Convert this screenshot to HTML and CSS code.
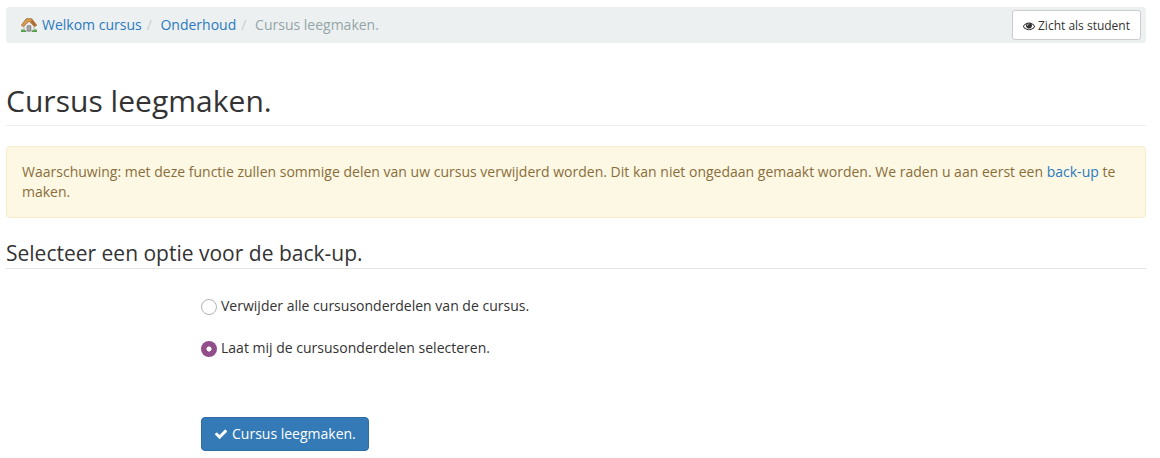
FILE: index.html
```html
<!DOCTYPE html>
<html lang="nl">
<head>
<meta charset="utf-8">
<title>Cursus leegmaken</title>
<link rel="stylesheet" href="styles.css">
</head>
<body>
<nav class="breadcrumb">
  <svg class="home" viewBox="0 0 16 16" width="16" height="16"><path d="M3 7.500v6.500h10V7.500L8 3z" fill="#ececea" stroke="#a8a8a2" stroke-width=".8"/><path d="M6.200 8.800h3.600V14H6.200z" fill="#a7a7ab" stroke="#77777b" stroke-width=".8"/><path d="M.3 8.300 5.300 1.700h5.400l5 6.600-2 1.300L8 4.200 2.300 9.600z" fill="#d79b50" stroke="#a26a2d" stroke-width=".8"/><path d="M10.700 2.200l4.600 6-1.600 1L10 5.300z" fill="#aa6836"/><path d="M0 14.700V13l1.500-1 1.300 1 1.200-.4.800 2.100zM11.200 14.700l.8-2 1.200.3 1.300-1L16 13v1.700z" fill="#62b451"/><path d="M0 14.300h5M11 14.300h5" stroke="#3f8140" stroke-width=".8"/></svg>
  <a href="#">Welkom cursus</a><span class="sep">/</span><a href="#">Onderhoud</a><span class="sep">/</span><span class="current">Cursus leegmaken.</span>
  <button class="view"><svg viewBox="0 0 1792 1792" width="12" height="12"><path fill="currentColor" d="M1664 960q-152-236-381-353 61 104 61 225 0 185-131.500 316.500t-316.500 131.500-316.500-131.500-131.500-316.500q0-121 61-225-229 117-381 353 133 205 333.500 326.500t434.500 121.500 434.500-121.500 333.500-326.500zm-720-384q0-20-14-34t-34-14q-125 0-214.500 89.500t-89.500 214.500q0 20 14 34t34 14 34-14 14-34q0-86 61-147t147-61q20 0 34-14t14-34zm848 384q0 34-20 69-140 230-376.500 368.500t-499.500 138.500-499.500-139-376.500-368q-20-35-20-69t20-69q140-229 376.500-368t499.500-139 499.500 139 376.500 368q20 35 20 69z"/></svg>Zicht als student</button>
</nav>
<h1>Cursus leegmaken.</h1>
<div class="warning">Waarschuwing: met deze functie zullen sommige delen van uw cursus verwijderd worden. Dit kan niet ongedaan gemaakt worden. We raden u aan eerst een <a href="#">back-up</a> te maken.</div>
<form>
  <h2>Selecteer een optie voor de back-up.</h2>
  <div class="fields">
    <label><input type="radio" name="option">Verwijder alle cursusonderdelen van de cursus.</label>
    <label><input type="radio" name="option" checked>Laat mij de cursusonderdelen selecteren.</label>
    <button type="button" class="submit"><svg viewBox="0 0 1792 1792" width="14" height="14"><path fill="currentColor" d="M1671 566q0 40-28 68l-724 724-136 136q-28 28-68 28t-68-28l-136-136-362-362q-28-28-28-68t28-68l136-136q28-28 68-28t68 28l294 295 656-657q28-28 68-28t68 28l136 136q28 28 28 68z"/></svg>Cursus leegmaken.</button>
  </div>
</form>
</body>
</html>
```
FILE: styles.css
```css
* { box-sizing: border-box; }
body { margin: 7px 14px 0 6px; font: 14px/20px "Open Sans", sans-serif; color: #333; background: #fff; }
a { color: #2a7abf; text-decoration: none; }
.breadcrumb { display: flex; align-items: center; height: 36px; margin-bottom: 36px; padding: 0 5px 0 15px; background: #ecf0f1; border-radius: 4px; }
.home { margin-right: 5px; }
.sep { padding: 0 8.700px 0 5px; color: #ccc; }
.current { color: #95a5a6; }
.view { display: flex; align-items: center; gap: 3px; height: 30px; width: 129px; margin-left: auto; padding: 2px 10px 1px; border: 1px solid #ccc; border-radius: 3px; background: #fff; color: #333; font: 12px/18px "Open Sans", sans-serif; white-space: nowrap; }
h1 { height: 47px; margin: 0 0 20px; padding-top: 5px; border-bottom: 1px solid #eee; font-size: 30px; line-height: 33px; font-weight: 400; letter-spacing: .03px; }
.warning { height: 72px; padding: 15px; border: 1px solid #faebcc; border-radius: 4px; background: #fcf8e3; color: #8a6d3b; letter-spacing: .007px; }
h2 { height: 31px; margin: 20px 0 27px; border-bottom: 1px solid #e5e5e5; font-size: 21px; line-height: 30px; font-weight: 400; }
.fields { display: flex; flex-direction: column; align-items: flex-start; padding-left: 195px; }
label { display: flex; height: 20px; margin-bottom: 22px; letter-spacing: .007px; }
input { appearance: none; width: 16px; height: 16px; margin: 3px 4px 0 0; border: 1px solid #b3b3b3; border-radius: 50%; background: #fff; }
input:checked { border: 0; background: radial-gradient(circle, #fff 0 2.200px, #924d8b 2.900px); }
.submit { display: flex; align-items: center; gap: 4px; width: 168px; height: 34px; margin-top: 37px; padding: 0 12px; border: 1px solid #2e6da4; border-radius: 4px; background: #337ab7; color: #fff; font: 14px/20px "Open Sans", sans-serif; white-space: nowrap; }
```
